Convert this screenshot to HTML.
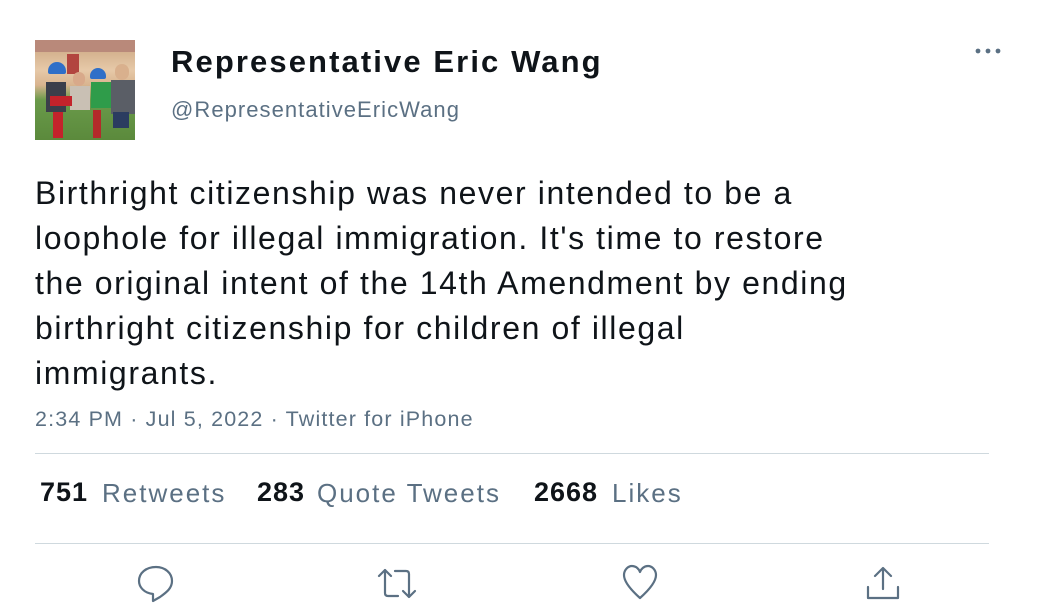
<!DOCTYPE html>
<html><head><meta charset="utf-8"><style>
body{margin:0;width:1050px;height:615px;background:#fff;font-family:"Liberation Sans",Arial,sans-serif;position:relative;overflow:hidden}
.a{position:absolute;white-space:nowrap}
.av{left:35px;top:40px;width:100px;height:100px;overflow:hidden;background:linear-gradient(#c9a27e 0,#e6c9a8 30%,#d9b48f 45%,#6a9a4a 60%,#5b8a3c 100%)}
.name{left:171px;top:44px;font-size:31px;font-weight:bold;color:#0f1419;letter-spacing:2.1px}
.handle{left:171px;top:97px;font-size:22px;color:#5b7083;letter-spacing:1.05px}
.body{left:35px;top:171px;font-size:32px;line-height:45px;color:#0f1419;letter-spacing:1.6px}
.ts{left:35px;top:407px;font-size:21.5px;color:#5b7083;letter-spacing:1.15px}
.hr{left:35px;width:954px;height:1px;background:#cfd9de}
.st{top:478px;font-size:26px;color:#5b7083;letter-spacing:2px}
.b{color:#0f1419;font-weight:bold;letter-spacing:1px;font-size:27px;top:477px}
.dots{left:974px;top:46px}
</style></head><body>
<div class="a av">
<div class="a" style="left:0;top:0;width:100px;height:12px;background:#b9897a"></div>
<div class="a" style="left:32px;top:14px;width:12px;height:20px;background:#b2453f"></div>
<div class="a" style="left:13px;top:22px;width:18px;height:12px;border-radius:9px 9px 2px 2px;background:#2f6fc8"></div>
<div class="a" style="left:55px;top:28px;width:16px;height:11px;border-radius:8px 8px 2px 2px;background:#2f6fc8"></div>
<div class="a" style="left:11px;top:42px;width:20px;height:30px;background:#3b3e4a"></div>
<div class="a" style="left:38px;top:32px;width:12px;height:14px;border-radius:6px;background:#d8a98a"></div>
<div class="a" style="left:35px;top:46px;width:20px;height:24px;background:#c9c0b4"></div>
<div class="a" style="left:56px;top:42px;width:22px;height:26px;background:#2f9c4a"></div>
<div class="a" style="left:80px;top:24px;width:14px;height:16px;border-radius:7px;background:#d9b08d"></div>
<div class="a" style="left:76px;top:40px;width:24px;height:34px;background:#5a5e66"></div>
<div class="a" style="left:78px;top:72px;width:16px;height:16px;background:#2b3c60"></div>
<div class="a" style="left:15px;top:56px;width:22px;height:10px;background:#c3232b"></div>
<div class="a" style="left:18px;top:72px;width:10px;height:26px;background:#c3232b"></div>
<div class="a" style="left:58px;top:70px;width:8px;height:28px;background:#b32a2a"></div>
</div>
<div class="a name">Representative Eric Wang</div>
<div class="a handle">@RepresentativeEricWang</div>
<svg class="a dots" width="28" height="10"><circle cx="4" cy="5" r="2.4" fill="#5b7083"/><circle cx="14" cy="5" r="2.4" fill="#5b7083"/><circle cx="24" cy="5" r="2.4" fill="#5b7083"/></svg>
<div class="a body">Birthright citizenship was never intended to be a<br>loophole for illegal immigration. It's time to restore<br>the original intent of the 14th Amendment by ending<br>birthright citizenship for children of illegal<br>immigrants.</div>
<div class="a ts">2:34 PM · Jul 5, 2022 · Twitter for iPhone</div>
<div class="a hr" style="top:453px"></div>
<div class="a st b" style="left:40px">751</div><div class="a st" style="left:102px">Retweets</div>
<div class="a st b" style="left:257px">283</div><div class="a st" style="left:317px">Quote Tweets</div>
<div class="a st b" style="left:534px">2668</div><div class="a st" style="left:612px">Likes</div>
<div class="a hr" style="top:543px"></div>
<svg class="a" style="left:0;top:560px" width="1050" height="55" fill="none" stroke="#5b7083" stroke-width="2.2" stroke-linecap="round" stroke-linejoin="round">
<path d="M153 41 L153 34 C144 33 139 27 139 21 C139 13 146 7 156 7 C165 7 172 13 172 21 C172 28 167 32 160 37 Z"/>
<path d="M385 10 L385 33 Q385 36 388 36 L398 36 M379 16 L385 10 L391 16"/>
<path d="M395 11 L406 11 Q409 11 409 14 L409 37 M403 31 L409 37 L415 31"/>
<path d="M640 38 C631 30 624 22 624 15 C624 10 628 6 632 6 C636 6 639 9 640 12 C641 9 644 6 648 6 C652 6 656 10 656 15 C656 22 649 30 640 38 Z"/>
<path d="M883 9 L883 29 M875 16 L883 8 L891 16 M868 27 L868 38 L898 38 L898 27"/>
</svg>
</body></html>
